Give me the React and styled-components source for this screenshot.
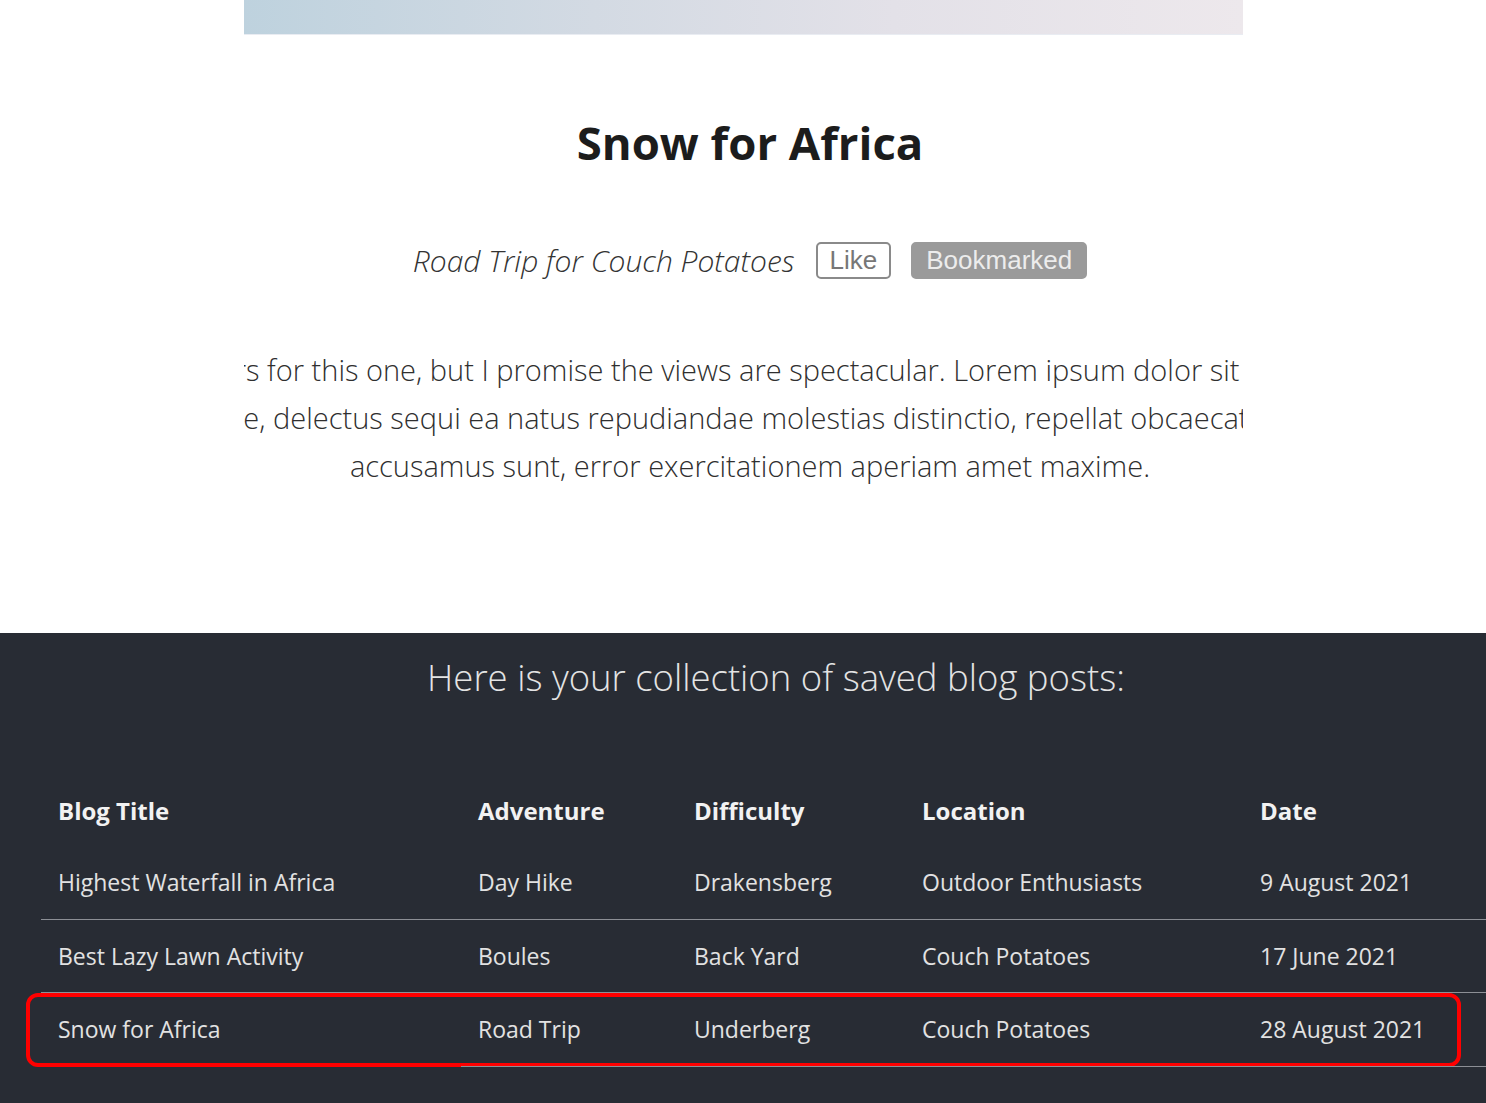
import React from 'react';
import styled, { createGlobalStyle } from 'styled-components';

const GlobalStyle = createGlobalStyle`
  html, body {
    margin: 0;
    padding: 0;
    background: #fff;
    overflow: hidden;
  }
  body {
    font-family: "Open Sans", "Noto Sans", sans-serif;
  }
  * {
    box-sizing: border-box;
  }
`;

const Page = styled.div`
  width: 100%;
  min-height: 1103px;
  display: flex;
  flex-direction: column;
`;

const Article = styled.article`
  display: flex;
  flex-direction: column;
  align-items: center;
  padding-bottom: 143px;
`;

const Banner = styled.div`
  width: 999px;
  height: 35px;
  background: linear-gradient(90deg, #bed2de 0%, #d3dae3 35%, #e3e1e8 65%, #ede8ec 100%);
  border-bottom: 1px solid #e9ecf2;
`;

const PostTitle = styled.h1`
  margin: 80px 0 0 14px;
  font-size: 45.5px;
  line-height: 55px;
  font-weight: 700;
  color: #1c1c1c;
`;

const MetaRow = styled.div`
  margin: 72px 0 0 14px;
  display: flex;
  align-items: center;
  gap: 20px;
  height: 37px;
`;

const Category = styled.span`
  font-size: 30px;
  font-style: italic;
  font-weight: 300;
  color: #333;
  margin-right: 1px;
`;

const ActionButton = styled.button`
  font-family: "Liberation Sans", Arial, sans-serif;
  font-size: 26px;
  height: 37px;
  padding: 0 ${p => (p.$active ? 13 : 12)}px;
  border-radius: 5px;
  border: 2px solid ${p => (p.$active ? '#9a9a9a' : '#8a8a8a')};
  background: ${p => (p.$active ? '#9a9a9a' : '#fff')};
  color: ${p => (p.$active ? '#ececec' : '#777')};
  cursor: pointer;
`;

const Lead = styled.div`
  width: 999px;
  margin-top: 67px;
  overflow: hidden;
  font-size: 29px;
  font-weight: 300;
  line-height: 48px;
  color: #2f2f2f;
`;

const LeadLine = styled.div`
  white-space: nowrap;
  display: flex;
  justify-content: ${p => p.$align || 'center'};
  margin-right: ${p => p.$pull || 0}px;
  padding-left: ${p => p.$shift || 0}px;
`;

const Saved = styled.section`
  flex: 1;
  background: #282c34;
  padding-top: 22px;
  overflow: hidden;
`;

const SavedTitle = styled.h2`
  margin: 0;
  padding-left: 66px;
  text-align: center;
  font-size: 36.5px;
  line-height: 45px;
  font-weight: 300;
  color: #e4e4e4;
`;

const Table = styled.div`
  margin: 74px 0 0 41px;
  display: grid;
  grid-template-columns: 420px 216px 228px 338px 1fr;
`;

const Row = styled.div`
  display: contents;
`;

const Cell = styled.div`
  position: relative;
  height: ${p => (p.$head ? '72px' : '73.5px')};
  display: flex;
  align-items: center;
  padding-left: 17px;
  font-size: ${p => (p.$head ? '24px' : '23px')};
  font-weight: ${p => (p.$head ? 700 : 400)};
  color: ${p => (p.$head ? '#f2f2f2' : '#e2e2e2')};
  border-bottom: ${p => (p.$head ? 'none' : '1px solid #8c8f95')};
  white-space: nowrap;
`;

const Highlight = styled.div`
  position: absolute;
  left: -15px;
  top: 0;
  width: 1435px;
  height: 74px;
  border: 4px solid #ff0000;
  border-radius: 12px;
  pointer-events: none;
`;

const columns = ['Blog Title', 'Adventure', 'Difficulty', 'Location', 'Date'];

const savedPosts = [
  ['Highest Waterfall in Africa', 'Day Hike', 'Drakensberg', 'Outdoor Enthusiasts', '9 August 2021'],
  ['Best Lazy Lawn Activity', 'Boules', 'Back Yard', 'Couch Potatoes', '17 June 2021'],
  ['Snow for Africa', 'Road Trip', 'Underberg', 'Couch Potatoes', '28 August 2021'],
];

const App = () => {
  return (
    <Page>
      <GlobalStyle />
      <Article>
        <Banner />
        <PostTitle>Snow for Africa</PostTitle>
        <MetaRow>
          <Category>Road Trip for Couch Potatoes</Category>
          <ActionButton>Like</ActionButton>
          <ActionButton $active>Bookmarked</ActionButton>
        </MetaRow>
        <Lead>
          <LeadLine $align="flex-end" $pull={3}>
            Be prepared to drive many hours for this one, but I promise the views are spectacular. Lorem ipsum dolor sit
          </LeadLine>
          <LeadLine $align="flex-end" $pull={-6}>
            amet consectetur adipisicing elit. Quae, delectus sequi ea natus repudiandae molestias distinctio, repellat obcaecat
          </LeadLine>
          <LeadLine $shift={14}>accusamus sunt, error exercitationem aperiam amet maxime.</LeadLine>
        </Lead>
      </Article>

      <Saved>
        <SavedTitle>Here is your collection of saved blog posts:</SavedTitle>
        <Table>
          <Row>
            {columns.map(c => (
              <Cell key={c} $head>{c}</Cell>
            ))}
          </Row>
          {savedPosts.map((post, i) => (
            <Row key={post[0]}>
              {post.map((value, j) => (
                <Cell key={j}>
                  {i === savedPosts.length - 1 && j === 0 && <Highlight />}
                  {value}
                </Cell>
              ))}
            </Row>
          ))}
        </Table>
      </Saved>
    </Page>
  );
};

export default App;
